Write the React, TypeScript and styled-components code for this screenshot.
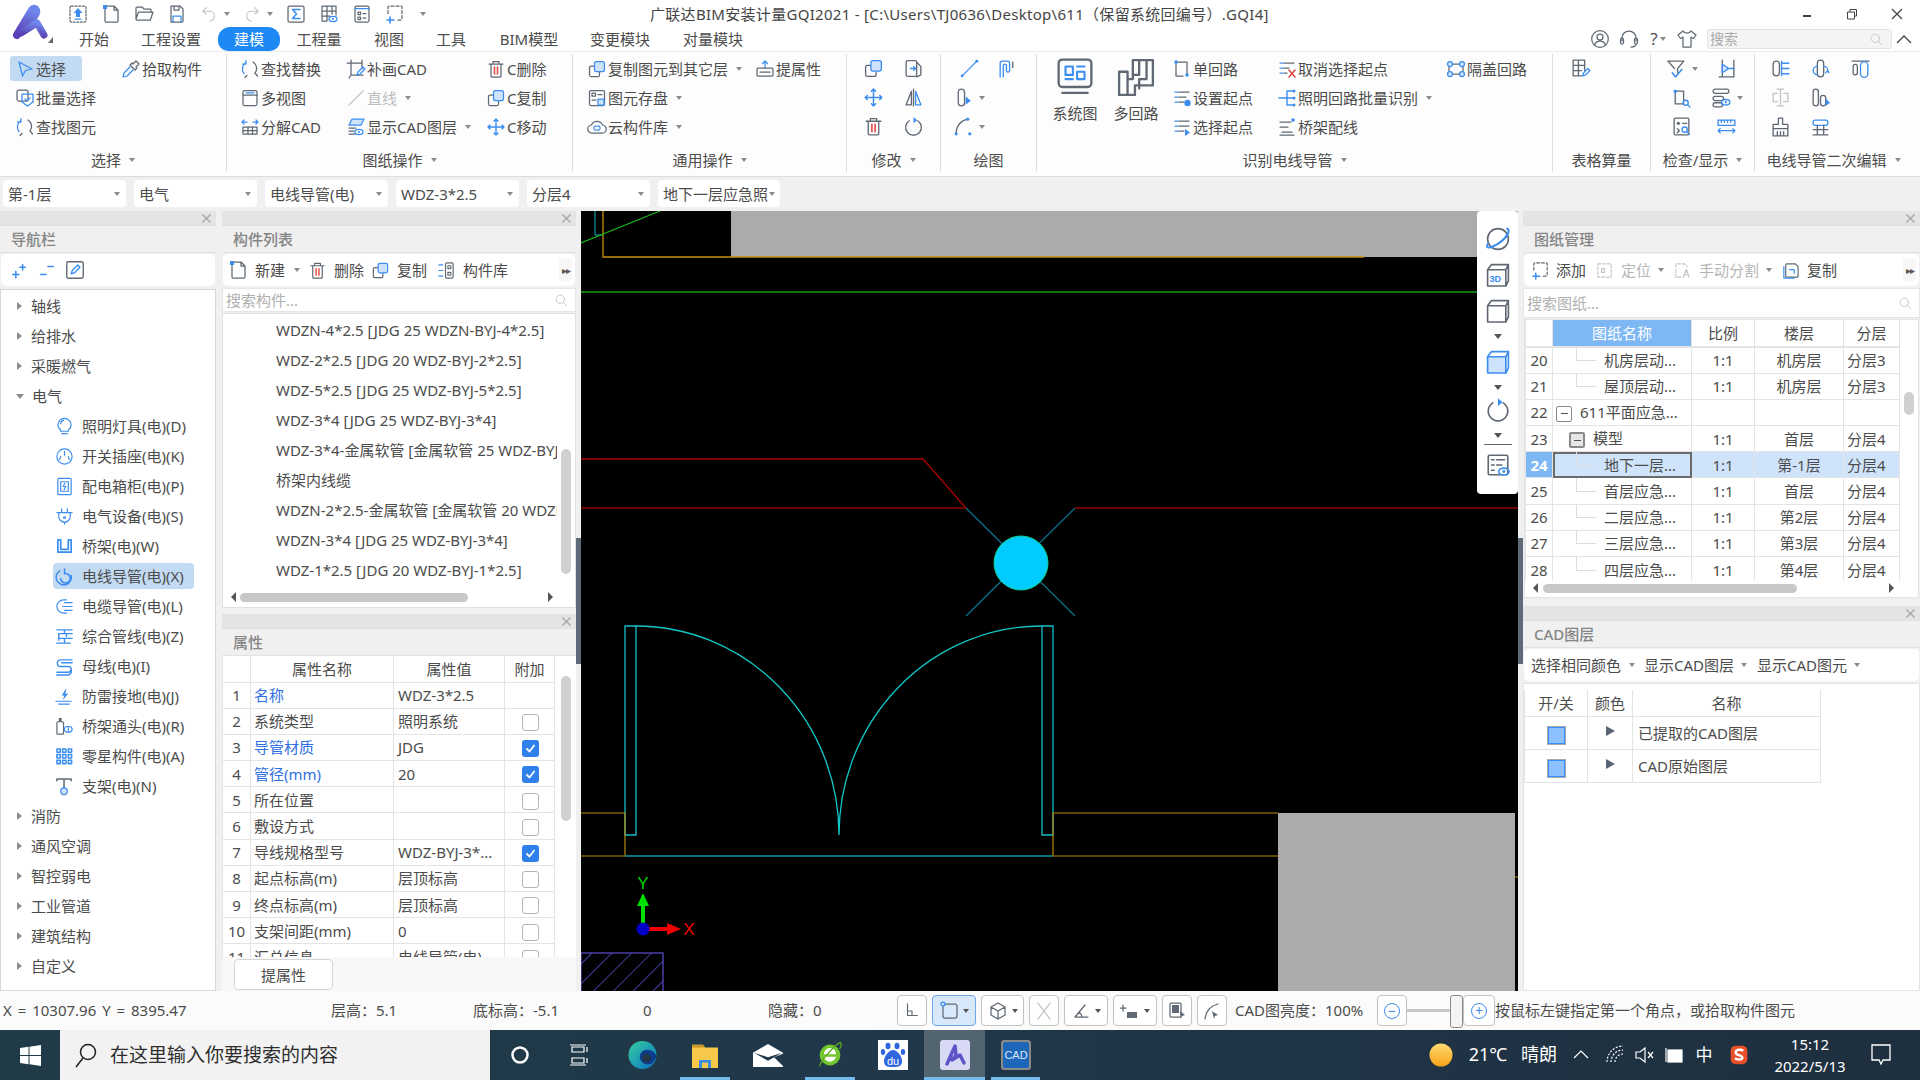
import React from 'react';
import styled, { createGlobalStyle, css } from 'styled-components';

const Global = createGlobalStyle`
  html, body { margin: 0; padding: 0; background: #f0f0f0; }
  * { box-sizing: border-box; }
  body { font-family: "Noto Sans", "Noto Sans CJK SC", sans-serif; font-size: 15px; line-height: 1.2; color: #4c4c4c; }
`;

const Root = styled.div`
  width: 1920px; height: 1080px; overflow: hidden; display: flex; flex-direction: column; background: #f0f0f0;
`;

/* ---------- icons ---------- */
const Svg = styled.svg<{ $off?: boolean }>`
  flex: none; fill: none; stroke: #5f6873; stroke-width: 1.25; stroke-linecap: round; stroke-linejoin: round;
  .a { stroke: #3b8df0; }
  .f { fill: #3b8df0; stroke: none; }
  .l { fill: #cfe2fb; stroke: #3b8df0; }
  .r { stroke: #e2453f; }
  .k { fill: #5f6873; stroke: none; }
  .t { fill: #3b8df0; stroke: none; font: 700 7px "Liberation Sans", sans-serif; }
  ${p => p.$off && css`
    stroke: #c4c4c4;
    .a, .r { stroke: #c4c4c4; }
    .l { fill: none; stroke: #c4c4c4; }
    .f, .k { fill: #c4c4c4; }
  `}
`;

const eye = (x: number, y: number) => (
  <>
    <ellipse className="a" cx={x} cy={y} rx="4" ry="2.6" />
    <circle className="f" cx={x} cy={y} r="1.1" />
  </>
);

const ICONS: Record<string, React.ReactNode> = {
  upload: <><rect x="2" y="2" width="16" height="16" rx="1.5" strokeDasharray="2 1.6" /><path className="f" d="M10 4l4.5 5H12v4H8V9H5.500z" /><path className="a" d="M7 15h6" /></>,
  newfile: <><path d="M5 2h8l4 4v11a1 1 0 0 1-1 1H5a1 1 0 0 1-1-1V3a1 1 0 0 1 1-1zM13 2v4h4" /><rect className="f" x="2" y="1" width="4" height="4" /></>,
  folder: <path d="M2 15V4a1 1 0 0 1 1-1h5l2 2h6a1 1 0 0 1 1 1v2M2 15l2.500-7H19l-2.600 8H3a1 1 0 0 1-1-1z" />,
  save: <><path d="M4 2h9l3 3v12a1 1 0 0 1-1 1H4z" /><path d="M7 2v4h5V2" /><path className="a" d="M6 18v-6h8v6" /></>,
  undo: <path d="M7 3L3 7l4 3M3 7h8a5 5 0 0 1 5 5c0 3-2 5-5 6" />,
  redo: <path d="M13 3l4 4-4 3M17 7H9a5 5 0 0 0-5 5c0 3 2 5 5 6" />,
  sigma: <><rect x="2" y="2" width="16" height="16" rx="1.500" /><path className="a" strokeWidth="1.600" d="M14 5.500H6.500l4 4.500-4 4.500H14" /></>,
  gridview: <><path d="M3 16V2h14v9M3 7h14M3 12h8M8 2v15H3M13 2v8" />{eye(14, 15)}</>,
  listdoc: <><rect x="3" y="2" width="14" height="16" rx="1.500" /><path className="a" d="M3 4.500h14" /><rect x="6" y="8" width="2.600" height="2.600" /><rect x="6" y="13" width="2.600" height="2.600" /><path d="M11 9.500h3M11 14h3" /></>,
  addframe: <><path strokeDasharray="3 2" d="M9 2H4a1 1 0 0 0-1 1v7M11 2h5a1 1 0 0 1 1 1v12a1 1 0 0 1-1 1h-3" /><path className="a" strokeWidth="1.600" d="M5 13v6M2 16h7" /></>,
  pointer: <path className="a" d="M4 3l13 7-6.500 1.500L7.500 17z" />,
  dropper: <><path d="M15 2l3 3-3 3 1 1-2 2-5-5 2-2 1 1z" /><path className="a" d="M9 8l-6 6-1 4 4-1 6-6" /></>,
  batch: <><rect x="2" y="2" width="11" height="11" rx="2" /><path className="a" d="M7 6h11v8l-5.500 4L7 14z" /><path className="a" d="M10 11l2 2 3-3" /></>,
  find: <><path className="a" d="M6 3.500a7.500 7.500 0 0 0-2 11M6 1.500v3.500H2.500" /><path d="M13 3a7.500 7.500 0 0 1 2 11l2.500 3M7 16.500l-2 2" /></>,
  window: <><rect x="3" y="2.500" width="14" height="15" rx="1.500" /><path d="M3 7h14" /><path className="a" d="M6 4.800h8" /></>,
  split: <><path className="a" d="M2 5h5M4 3L2 5l2 2M18 5h-5M16 3l2 2-2 2" /><rect x="3" y="10" width="14" height="7" /><path d="M3 13.500h14M8 10v7M12.500 10v7" /></>,
  crop: <><path d="M5 1v15h12M1 4h15v6M3 19l2-3M16 1v3" /><path className="a" d="M11 16l1-3 5-5 2 2-5 5z" /></>,
  line: <path d="M3 17L17 3" />,
  layers: <><path className="l" d="M6 2h12l-3 6H3z" /><path d="M3 11h7M3 14h5M3 17h6" />{eye(13, 15)}</>,
  trash: <><path d="M3 5h14M7 5V2.500h6V5M5 5v12a1 1 0 0 0 1 1h8a1 1 0 0 0 1-1V5" /><path className="r" strokeWidth="1.500" d="M8.500 8v7M11.500 8v7" /></>,
  copy: <><path d="M8 7H4a1.500 1.500 0 0 0-1.500 1.500V16A1.500 1.500 0 0 0 4 17.500h7a1.500 1.500 0 0 0 1.500-1.500v-3" /><rect className="l" x="7.500" y="2.500" width="10" height="10" rx="2" /></>,
  move: <><path className="a" strokeWidth="1.400" d="M10 2v16M2 10h16M8 4l2-2 2 2M8 16l2 2 2-2M4 8l-2 2 2 2M16 8l2 2-2 2" /></>,
  store: <><rect x="2.500" y="2.500" width="15" height="15" rx="1.500" /><rect x="5" y="5" width="3.500" height="3" /><path d="M11 6.500h4M5 12h4" /><rect className="l" x="11" y="11" width="6" height="6" /></>,
  cloud: <><path d="M5 16a4 4 0 0 1-.5-8A6 6 0 0 1 15.500 8 4 4 0 0 1 15 16z" /><rect className="a" x="7" y="9" width="6" height="4" rx="1.500" /></>,
  prop: <><path className="a" d="M10 9V2M7.500 4.500L10 2l2.500 2.500" /><rect x="2" y="9" width="16" height="8" rx="1" /><path d="M5 13h10" /></>,
  door: <><rect x="3" y="2.500" width="10" height="15" rx="1.500" /><path className="a" d="M7 10h5M10 8l2 2-2 2" /><path d="M13 4l4 4v8l-4 2" /></>,
  mirror: <><path d="M8 4L3 17h5zM10 2v16" /><path className="a" d="M12 4l5 13h-5z" /></>,
  rotate: <><path d="M6 4.500a7.500 7.500 0 1 0 8 0" /><path className="f" d="M10 1l3.500 3L10 7z" /></>,
  segment: <><path className="a" d="M3 17L17 3" /><circle className="f" cx="3" cy="17" r="1.400" /><circle className="f" cx="17" cy="3" r="1.400" /></>,
  pipe: <><path className="a" d="M3 18V5a2 2 0 0 1 2-2h5a2 2 0 0 1 2 2v7M6 18V7a1 1 0 0 1 1-1h1a1 1 0 0 1 1 1v5" /><path d="M15 4v5" /><path className="a" d="M12 12a1.500 1.500 0 0 1-3 0" /></>,
  tube: <><rect x="5" y="2" width="6" height="16" rx="3" /><path className="f" d="M12 9l5 4-5 4z" /></>,
  arc: <><path d="M3 17C3 9 8 4 14 3" /><circle className="f" cx="3" cy="17" r="1.500" /><circle className="f" cx="14" cy="3" r="1.500" /><circle className="f" cx="16" cy="17" r="1.500" /></>,
  system: <><rect x="2.500" y="1.500" width="31" height="26" rx="3.500" strokeWidth="2.200" /><path d="M6 33h24" strokeWidth="2.200" /><path className="a" strokeWidth="2" d="M9 8h7v8H9zM20 8h7M20 13h7v7h-7zM9 20h7" /></>,
  multi: <path strokeWidth="2.200" d="M2 13h8v22H2zM10 20h5V2M15 2h19v24H17v9h-7M21 2v14h-6M28 2v18H21v9" />,
  single: <><path d="M4 3h11v12M4 3v14h7" /><circle className="f" cx="4" cy="3" r="1.800" /><circle className="f" cx="15" cy="16" r="1.800" /></>,
  setstart: <><path className="a" d="M3 4h3M3 9h3M3 14h3" /><path d="M7 4h10M7 9h7M7 14h5" /><circle className="f" cx="15.500" cy="15" r="3.200" /></>,
  pickstart: <><path className="a" d="M3 4h3M3 9h3M3 14h3" /><path d="M7 4h10M7 9h10M7 14h5" /><path className="f" d="M13 12l5 3.500-5 3.500z" /></>,
  cancel: <><path className="a" d="M3 4h3M3 9h3M3 14h3" /><path d="M7 4h10M7 9h5M7 14h3" /><path className="r" strokeWidth="1.500" d="M12 11l6 7M18 11l-6 7" /></>,
  tree: <><path className="a" strokeWidth="1.400" d="M2 10h8M10 3v14M10 3h6M10 10h6M10 17h6" /><circle className="f" cx="17" cy="3" r="1.500" /><circle className="f" cx="17" cy="10" r="1.500" /><circle className="f" cx="17" cy="17" r="1.500" /></>,
  trayline: <><path d="M3 5h11M3 10h8M3 18h14M5 15h10" /><circle className="f" cx="16" cy="3" r="1.800" /></>,
  shield: <><rect x="3" y="5" width="14" height="10" rx="3" /><circle className="l" cx="4" cy="5" r="2.500" /><circle className="l" cx="16" cy="5" r="2.500" /><circle className="l" cx="4" cy="15" r="2.500" /><circle className="l" cx="16" cy="15" r="2.500" /></>,
  tableedit: <><path d="M14 12V2H3v15h8M3 7h11M8 2v15M3 12h8" /><path className="a" d="M12 17l1-3 4-4 2 2-4 4z" /></>,
  filter: <><path d="M2 3h15l-6 7v4" /><path d="M8 10L2 3" /><path className="a" strokeWidth="1.500" d="M6 14l3 4 6-7" /></>,
  beam: <><path d="M3 18h14V2M6 18V2" /><path className="l" d="M6 6l5 3v2l-5 3z" /><path className="a" d="M11 10h6" /></>,
  corner: <><path d="M4 4h8v12H4z" /><circle className="f" cx="4" cy="4" r="1.600" /><circle className="a" cx="14" cy="15" r="2.400" /><path className="a" d="M16 17l2 2" /></>,
  stack: <><rect x="2" y="2" width="15" height="4" rx="2" /><rect x="2" y="9" width="10" height="4" rx="2" /><rect x="2" y="15" width="9" height="4" rx="2" />{eye(14, 14.500)}</>,
  check: <><rect x="3" y="2" width="14" height="16" rx="1" /><circle className="k" cx="7" cy="7" r="1.500" /><path d="M11 7h4M6 12l2 2-2 2" /><circle className="a" cx="13" cy="13" r="2.500" /><path className="a" d="M15 15l2.500 2.500" /></>,
  ruler: <><path className="a" d="M2 4h16v5H2zM5 4v2M8 4v2M11 4v2M14 4v2M2 14h16M4 12l-2 2 2 2M16 12l2 2-2 2" /></>,
  lines: <><rect x="3" y="3" width="6" height="14" rx="3" /><path className="a" d="M11 5h7M11 10h7M11 15h7M11 3v14" /></>,
  bend: <><rect x="7" y="2" width="6" height="16" rx="3" /><path className="a" d="M7 8a4 4 0 0 0 0 8M13 8a4 4 0 0 1 4 4M15 14l2-2 1 2" /></>,
  capsule: <><path d="M2 3h16" /><rect x="3" y="6" width="4" height="10" rx="2" /><rect className="a" x="10" y="3.500" width="7" height="15" rx="3.500" /></>,
  ibeam: <><path d="M10 2v16M7 2h6M7 18h6" /><path d="M7 6H3v8h4M13 6h4v8h-4" /></>,
  twopipe: <><rect x="3" y="2" width="5" height="16" rx="2.500" /><rect x="10" y="8" width="5" height="10" rx="2.500" /><path className="f" d="M15 11l4 4-4 3z" /></>,
  brush: <><path d="M8 2h4v6h5v4H3V8h5zM3 12v7h14v-7M7 15v4M10 15v4M13 15v4" /></>,
  bridge: <><rect className="a" x="3" y="4" width="14" height="5" rx="2" /><path d="M7 9v9M13 9v9M3 18h14M3 13h14" /></>,
  orbit: <><circle cx="10" cy="10" r="8" /><path className="a" strokeWidth="1.600" d="M2 14c-2 4 3 3 9-1s9-10 6-11" /></>,
  cube3d: <><path d="M2 6h14v12.500H2zM2 6l3-4h13v12.500l-2 4M16 6l2-4" /><text className="t" x="3.500" y="15.500">3D</text></>,
  cube: <path d="M2 6h14v12.500H2zM2 6l3-4h13v12.500l-2 4M16 6l2-4" />,
  cubeblue: <><path className="l" d="M2 6h14v12.500H2z" /><path className="a" d="M2 6l3-4h13v12.500l-2 4M16 6l2-4" /></>,
  listeye: <><rect x="2.500" y="2.500" width="15" height="15" rx="1" /><path d="M5 6h2M9 6h6M5 10h2M9 10h4M5 14h2" />{eye(14.500, 15)}</>,
  user: <><circle cx="10" cy="10" r="8.300" /><circle cx="10" cy="8" r="3" /><path d="M4.500 16c1-3 3-4 5.500-4s4.500 1 5.500 4" /></>,
  headset: <><path d="M3 12V9a7 7 0 0 1 14 0v3" /><rect x="1.500" y="9" width="3" height="6" rx="1.500" /><rect x="15.500" y="9" width="3" height="6" rx="1.500" /><path d="M17 15c0 2-2 3-5 3" /></>,
  shirt: <path d="M6 2L1 6l2.500 3.500L6 8v10h8V8l2.500 1.500L19 6l-5-4c-1 2-3 2-4 2S7 4 6 2z" />,
  search: <><circle cx="9" cy="9" r="6" /><path d="M13.500 13.500L18 18" /></>,
  bulb: <><path className="a" d="M6 14C4 12 3 10.500 3 8.500a7 7 0 0 1 14 0c0 2-1 3.500-3 5.500v1H6z" /><path className="a" d="M7 17.500h6" /><path className="a" d="M6 7c0-2 1-3 3-3.500" /></>,
  socket: <><circle className="a" cx="10" cy="10" r="8" /><path className="a" d="M10 4.500v4M6 10l-1 3M14 10l1 3" /></>,
  box: <><rect className="a" x="3" y="1.500" width="14" height="17" rx="1" /><rect className="a" x="6" y="5" width="8" height="10" /><path className="a" d="M10.500 6.500L8.500 10h3l-2 3.500" /></>,
  plug: <><path className="a" d="M2 6h16M7 2v4M13 2v4M4 6v4a6 6 0 0 0 12 0V6M10 16v2" /><circle className="a" cx="10" cy="11" r="1" /></>,
  tray: <path className="a" strokeWidth="1.800" d="M3 3v13h14V3M3 3h2M17 3h-2M6 3v10h8V3" />,
  spiral: <><path className="a" strokeWidth="1.600" d="M5 4a8 8 0 1 0 12 5M10 2v5a5 5 0 1 1-4 5" /></>,
  cable: <><path className="a" d="M12 3H9a7 7 0 0 0 0 14h3" /><path className="a" d="M10 6h8M8 10h10M10 14h8" /></>,
  bundle: <path className="a" strokeWidth="1.500" d="M2 3h16M10 3v4M4 7h14M4 7v7M12 7v3M4 12h14M2 17h14M10 12v5" />,
  busbar: <path className="a" strokeWidth="1.500" d="M18 3H6a3.500 3.500 0 0 0 0 7h8a3 3 0 0 1 0 6H2M18 6H7M17 13a5 5 0 0 1-3 6H2" />,
  bolt: <><path className="f" d="M12 1L7 9h3l-2 5 6-7h-3z" /><path className="a" d="M1 15h16M4 18h11" /></>,
  joint: <><rect x="2" y="5" width="7" height="13" rx="1" /><path className="k" d="M4 1h3v4H4z" /><rect className="a" x="10" y="10" width="8" height="6" rx="3" /><path className="a" d="M14 10v6" /></>,
  grid9: <path className="a" strokeWidth="1.600" d="M2 2h3.500v3.500H2zM8 2h3.500v3.500H8zM14 2h3.500v3.500H14zM2 8h3.500v3.500H2zM8 8h3.500v3.500H8zM14 8h3.500v3.500H14zM2 14h3.500v3.500H2zM8 14h3.500v3.500H8zM14 14h3.500v3.500H14z" />,
  support: <><path strokeWidth="1.600" d="M2 2h15M2 2v2M17 2v2M9.500 2v10" /><circle className="l" cx="9.500" cy="15" r="3.500" /></>,
  plusdot: <path className="a" strokeWidth="1.700" d="M3 15h7M6.500 11.500v7M11 7h6M14 4v6" />,
  minusdot: <path className="a" strokeWidth="1.700" d="M3 15h6M11 6h6" />,
  editbox: <><rect x="2.500" y="2.500" width="15" height="15" rx="1.500" /><path className="a" d="M6.500 13.500l1-3 5-5 2 2-5 5z" /></>,
  library: <><path className="a" d="M2 4h4M2 10h4M2 16h4" /><rect x="9" y="2" width="8" height="16" rx="1.500" /><rect x="11.500" y="5" width="3" height="3" /><rect x="11.500" y="12" width="3" height="3" /></>,
  locate: <><path strokeDasharray="3 2" d="M3 3h14v14H3z" /><path d="M7 8h3v4H7z" /></>,
  splitdoc: <><path strokeDasharray="3 2" d="M3 6V3h9l3 3M3 9v8h6" /><path d="M11 17l3-8 3 8M12 14.500h4" /></>,
  copydoc: <><path d="M6 3h9l3 3v10a1 1 0 0 1-1 1H6a1 1 0 0 1-1-1V4a1 1 0 0 1 1-1z" /><path className="a" d="M3 6v12h11" /><path className="a" d="M9 9h5v4" /></>,
  axes: <path d="M5 2v13h11M5 10h5v5" />,
  rectpick: <><rect x="4" y="3" width="14" height="14" rx="2" /><circle className="l" cx="4" cy="3" r="2" /></>,
  hexbox: <><path d="M10 2l7 4v8l-7 4-7-4V6zM3 6l7 4 7-4M10 10v8" /></>,
  xcross: <path d="M4 2l12 16M16 2L4 18" />,
  angle: <path d="M4 16L14 4M4 16h13M8 11a7 7 0 0 1 3 5" />,
  plusbar: <><path d="M3 4v6M0 7h6" /><rect className="k" x="7" y="11" width="10" height="6" /></>,
  screen: <><rect x="3" y="2" width="11" height="14" rx="1" /><rect className="k" x="5" y="4" width="7" height="8" /><path className="k" d="M13 10l5 4-3 1-1 3z" /></>,
  curve: <><path d="M3 18C4 10 8 5 16 3" /><path className="k" d="M10 10l6 4-3 1-1 3z" /></>,
};

const Icon: React.FC<{ name: string; size?: number; off?: boolean; box?: number }> = ({ name, size = 20, off, box = 20 }) => (
  <Svg width={size} height={size} viewBox={`0 0 ${box} ${box}`} $off={off}>{ICONS[name]}</Svg>
);

const Caret = styled.i<{ $up?: boolean; $ml?: number }>`
  flex: none; display: inline-block; width: 0; height: 0; margin-left: ${p => p.$ml ?? 8}px;
  border-left: 3.500px solid transparent; border-right: 3.500px solid transparent;
  border-top: 4px solid #8b8b8b;
`;

/* ---------- header ---------- */
const Header = styled.header`
  height: 51px; flex: none; background: #fff; display: flex;
`;
const LogoSlot = styled.div`
  width: 64px; flex: none; display: flex; align-items: flex-start; padding: 4px 0 0 11px;
`;
const HeaderMain = styled.div`flex: 1; display: flex; flex-direction: column;`;
const TitleRow = styled.div`height: 27px; display: flex; align-items: center;`;
const Qat = styled.div`width: 586px; padding-left: 4px; display: flex; align-items: center; gap: 13px;`;
const QatGroup = styled.span`display: inline-flex; align-items: center; gap: 0;`;
const WindowTitle = styled.div`flex: 1; font-size: 15px; letter-spacing: 0.3px; color: #454545; white-space: pre;`;
const WinControls = styled.div`width: 136px; display: flex; align-items: center; gap: 0;`;
const WinBtn = styled.span`width: 47px; display: flex; justify-content: center;`;
const TabRow = styled.div`height: 24px; display: flex; align-items: stretch;`;
const Tab = styled.div<{ $w: number; $on?: boolean }>`
  width: ${p => p.$w}px; flex: none; display: flex; align-items: center; justify-content: center;
  font-size: 15px; color: #4c4c4c;
  ${p => p.$on && css`background: #1e88f5; color: #fff; border-radius: 12px 12px 10px 10px;`}
`;
const TabTools = styled.div`margin-left: auto; display: flex; align-items: center; padding-right: 6px;`;
const ToolGlyph = styled.span<{ $w: number }>`
  width: ${p => p.$w}px; display: flex; justify-content: center; align-items: center; font-size: 17px; color: #555;
`;
const TopSearch = styled.div`
  width: 185px; height: 20px; margin: 0 2px 0 6px; background: #f4f4f4; border: 1px solid #e4e4e4; border-radius: 3px;
  display: flex; align-items: center; justify-content: space-between; padding: 0 8px 0 2px; color: #aaa; font-size: 14px;
`;

/* ---------- ribbon ---------- */
const Ribbon = styled.section`
  height: 126px; flex: none; background: #fdfdfd; border-top: 1px solid #ececec; border-bottom: 1px solid #dcdcdc;
  padding-top: 2px; display: flex; align-items: flex-start;
`;
const Group = styled.div<{ $w: number; $pad?: number; $last?: boolean }>`
  width: ${p => p.$w}px; flex: none; height: 118px; display: flex; flex-direction: column; justify-content: space-between;
  padding-left: ${p => p.$pad ?? 0}px;
  ${p => !p.$last && 'border-right: 1px solid #dedede;'}
`;
const GroupBody = styled.div`display: flex; align-items: flex-start;`;
const GroupLabel = styled.div<{ $shift?: number }>`
  height: 24px; display: flex; align-items: center; justify-content: center; color: #4c4c4c; white-space: nowrap;
  margin-left: ${p => p.$shift ?? 0}px;
`;
const Col = styled.div<{ $w?: number }>`
  ${p => p.$w ? `width: ${p.$w}px; flex: none;` : ''} display: flex; flex-direction: column;
`;
const Item = styled.div<{ $on?: boolean; $off?: boolean; $w?: number }>`
  height: 29px; display: flex; align-items: center; padding-left: 3px; white-space: nowrap;
  color: ${p => p.$off ? '#bdbdbd' : '#4c4c4c'};
  ${p => p.$on && css`background: #c3daf3; border-radius: 3px; height: 25px; margin: 2px 0; width: 72px;`}
`;
const ItemIcon = styled.span`width: 23px; flex: none; display: flex; justify-content: center; margin-right: 0;`;
const Label = styled.span`margin-left: 0;`;
const IconCell = styled.div`height: 29px; display: flex; align-items: center; justify-content: center;`;
const BigTool = styled.div<{ $w: number }>`
  width: ${p => p.$w}px; flex: none; display: flex; flex-direction: column; align-items: center; gap: 8px; padding-top: 4px; color: #4c4c4c;
`;

const RItem: React.FC<{ icon: string; text: string; on?: boolean; off?: boolean; caret?: boolean }> = ({ icon, text, on, off, caret }) => (
  <Item $on={on} $off={off}>
    <ItemIcon><Icon name={icon} size={20} off={off} /></ItemIcon>
    <Label>{text}</Label>
    {caret && <Caret />}
  </Item>
);
const ICell: React.FC<{ icon: string; off?: boolean; caret?: boolean }> = ({ icon, off, caret }) => (
  <IconCell><Icon name={icon} size={21} off={off} />{caret && <Caret $ml={5} />}</IconCell>
);

/* ---------- selector row ---------- */
const SelectRow = styled.div`
  height: 34px; flex: none; display: flex; gap: 8px; padding: 3px 0 0 3px; background: #f0f0f0;
`;
const Select = styled.div<{ $w?: number }>`
  width: ${p => p.$w ?? 123}px; height: 27px; background: #fff; border-radius: 4px; display: flex; align-items: center;
  justify-content: space-between; padding: 0 6px 0 5px; color: #4c4c4c; white-space: nowrap;
`;

/* ---------- main panels ---------- */
const Main = styled.main`height: 780px; flex: none; display: flex; align-items: stretch;`;
const Splitter = styled.div<{ $w: number }>`
  width: ${p => p.$w}px; flex: none; display: flex; align-items: center; justify-content: flex-end;
  &::after { content: ""; width: 5px; height: 126px; background: #5d6b78; }
`;
const PlainGap = styled.div`width: 6px; flex: none;`;
const Column = styled.div<{ $w: number }>`width: ${p => p.$w}px; flex: none; display: flex; flex-direction: column;`;
const Strip = styled.div`
  height: 14px; flex: none; background: #e4e4e4; display: flex; align-items: center; justify-content: flex-end; padding-right: 5px;
`;
const CloseX = styled.svg`width: 9px; height: 9px; stroke: #a6a6a6; stroke-width: 1.300; fill: none;`;
const PanelTitle = styled.div`
  height: 28px; flex: none; background: #f0f0f0; border-top: 1px solid #dedede; border-bottom: 1px solid #e2e2e2; display: flex; align-items: center;
  padding-left: 11px; color: #858585; font-weight: 500;
`;
const PanelToolbar = styled.div<{ $h?: number }>`
  height: ${p => p.$h ?? 33}px; flex: none; margin: 1px 1px 2px; background: #fff; border-radius: 5px; display: flex; align-items: center;
  position: relative; white-space: nowrap;
`;
const TBtn = styled.span<{ $w: number; $off?: boolean; $pad?: number; $gap?: number }>`
  width: ${p => p.$w}px; flex: none; display: flex; align-items: center; gap: ${p => p.$gap ?? 7}px; padding-left: ${p => p.$pad ?? 0}px;
  color: ${p => p.$off ? '#b5b5b5' : '#4c4c4c'};
`;
const More = styled.span`
  margin-left: auto; margin-right: 3px; width: 13px; height: 24px; border-radius: 4px; background: #f7f7f7; color: #555; font-size: 10px;
  display: flex; align-items: center; justify-content: center; letter-spacing: -1px;
`;
const SearchBar = styled.div<{ $h: number }>`
  height: ${p => p.$h}px; flex: none; background: #fff; border: 1px solid #e6e6e6; display: flex; align-items: center;
  justify-content: space-between; padding: 0 7px 0 3px; color: #b0b0b0; margin-bottom: 1px;
`;

const NavTree = styled.div`
  flex: 1; background: #fff; border: 1px solid #d8d8d8; padding-top: 1px; margin-top: 1px;
`;
const TreeRow = styled.div<{ $child?: boolean; $on?: boolean }>`
  height: 30px; display: flex; align-items: center; padding-left: ${p => p.$child ? 54 : 16}px; white-space: nowrap;
`;
const Arrow = styled.i<{ $open?: boolean }>`
  flex: none; width: 0; height: 0; margin-right: 9px;
  ${p => p.$open
    ? 'border-left: 4px solid transparent; border-right: 4px solid transparent; border-top: 5px solid #8c8c8c; margin-left: -1px; margin-right: 8px;'
    : 'border-top: 4.500px solid transparent; border-bottom: 4.500px solid transparent; border-left: 5px solid #8c8c8c;'}
`;
const ChildPill = styled.span<{ $on?: boolean }>`
  display: flex; align-items: center; gap: 8px; height: 26px; width: 141px; margin-left: -2px; padding-left: 2px; border-radius: 4px;
  ${p => p.$on && 'background: #c3daf3;'}
`;

const ListBox = styled.div`
  flex: none; height: 295px; background: #fff; border: 1px solid #e0e0e0; position: relative; overflow: hidden; padding: 1px 0 0 53px;
`;
const ListRow = styled.div`height: 30px; width: 281px; overflow: hidden; white-space: nowrap; display: flex; align-items: center;`;
const ScrollV = styled.div<{ $top: number; $h: number; $right: number }>`
  position: absolute; top: ${p => p.$top}px; right: ${p => p.$right}px; width: 10px; height: ${p => p.$h}px; background: #d0d0d0; border-radius: 5px;
`;
const HScrollBar = styled.div<{ $left: number; $w: number; $bottom: number }>`
  position: absolute; left: ${p => p.$left}px; bottom: ${p => p.$bottom}px; width: ${p => p.$w}px; height: 9px; border-radius: 5px; background: #c8c8c8;
`;
const HArrow = styled.i<{ $right?: boolean; $x: number; $bottom: number }>`
  position: absolute; bottom: ${p => p.$bottom}px; ${p => p.$right ? `left: ${p.$x}px; border-left: 5px solid #555;` : `left: ${p.$x}px; border-right: 5px solid #555;`}
  width: 0; height: 0; border-top: 5px solid transparent; border-bottom: 5px solid transparent;
`;

const PropArea = styled.div`
  height: 301px; flex: none; background: #fff; position: relative; overflow: hidden;
`;
const Grid = styled.table<{ $w: number }>`
  width: ${p => p.$w}px; table-layout: fixed; border-collapse: collapse; background: #fff;
`;
const Th = styled.th<{ $w?: number; $sel?: boolean }>`
  ${p => p.$w ? `width: ${p.$w}px;` : ''} height: 26px; font-weight: 400; color: #4c4c4c; padding: 0; border: 1px solid #e4e4e4; border-top: 0;
  ${p => p.$sel && 'background: #7db8f5; color: #fff;'}
`;
const Td = styled.td<{ $c?: boolean; $blue?: boolean; $num?: boolean; $sel?: boolean; $rowsel?: boolean; $pad?: number }>`
  height: 26.200px; padding: 0 0 0 ${p => p.$pad ?? 3}px; border: 1px solid #e4e4e4; white-space: nowrap; overflow: hidden;
  color: ${p => p.$blue ? '#2f6fe0' : '#4c4c4c'};
  ${p => (p.$c || p.$num) && 'text-align: center; padding: 0;'}
  ${p => p.$rowsel && 'background: #cfe4fb;'}
  ${p => p.$sel && 'background: #7db8f5; color: #fff; font-weight: 700;'}
`;
const Check = styled.span<{ $on?: boolean }>`
  display: inline-flex; width: 17px; height: 17px; vertical-align: middle; border-radius: 3px; align-items: center; justify-content: center; margin-left: 1px;
  ${p => p.$on ? 'background: #2f80ea;' : 'background: #fff; border: 1px solid #b5b5b5;'}
`;
const FootRow = styled.div`flex: 1; background: #f8f8f8; padding: 2px 0 0 12px;`;
const PlainBtn = styled.button`
  width: 99px; height: 31px; font: inherit; color: #4c4c4c; background: #fff; border: 1px solid #d5d5d5; border-radius: 4px;
`;

const NameCell = styled(Td)<{ $depth: number; $leaf?: boolean; $focus?: boolean }>`
  position: relative; padding-left: ${p => p.$depth}px;
  ${p => p.$leaf && css`
    &::before { content: ""; position: absolute; left: 23px; width: 20px; top: 50%; border-top: 1px solid #ddd; }
    &::after { content: ""; position: absolute; left: 23px; top: 0; bottom: 50%; border-left: 1px solid #ddd; }
  `}
  ${p => p.$focus && 'outline: 2px solid #6b6b6b; outline-offset: -2px; background: #cfe4fb;'}
`;
const TreeBox = styled.span<{ $strong?: boolean }>`
  display: inline-flex; width: 16px; height: 16px; margin-right: 8px; vertical-align: middle; border: 1px solid #8a8a8a; border-radius: 2px;
  align-items: center; justify-content: center; ${p => p.$strong && 'background: #e6e6e6; border-width: 2px;'}
  &::after { content: ""; width: 7px; border-top: 1px solid #555; }
`;
const DrawingArea = styled.div`
  height: 279px; flex: none; background: #fff; border: 1px solid #e4e4e4; margin: 0 1px; position: relative; overflow: hidden;
`;
const BodyClip = styled.div`height: 234px; overflow: hidden;`;

const Canvas = styled.div`
  width: 937px; flex: none; position: relative; background: #000; overflow: hidden;
`;
const CanvasSvg = styled.svg`display: block;`;
const FloatBar = styled.div`
  position: absolute; top: 0; right: 0; width: 41px; height: 283px; background: #fff; border-radius: 4px; display: flex; flex-direction: column; align-items: center; padding-top: 15px;
`;
const FloatIcon = styled.span<{ $mt?: number }>`display: flex; margin-top: ${p => p.$mt ?? 0}px;`;
const FloatCaret = styled.i`
  margin-top: 10px; width: 0; height: 0; border-left: 4px solid transparent; border-right: 4px solid transparent; border-top: 5px solid #555; margin-bottom: 1px;
`;
const FloatSep = styled.hr`width: 28px; border: 0; border-top: 1px solid #666; margin: 5px 0 0;`;

const CadHead = styled.div<{ $mt: number }>`height: 14px; flex: none; background: #e4e4e4; margin-top: ${p => p.$mt}px; display: flex; align-items: center; justify-content: flex-end; padding-right: 5px;`;
const CadArea = styled.div`flex: 1; background: #fff; padding-top: 6px; border: 1px solid #e4e4e4; margin-top: 0;`;
const CadRowTd = styled(Td)`height: 33px;`;
const Swatch = styled.span`
  display: inline-block; width: 17px; height: 17px; vertical-align: middle; background: #8cc0ff; border: 1px solid #3a8dff; outline: 1px solid #a9a9a9; outline-offset: 0; margin-top: 5px;
`;
const PlayTri = styled.i`
  display: inline-block; width: 0; height: 0; border-top: 5px solid transparent; border-bottom: 5px solid transparent; border-left: 9px solid #596477; margin-bottom: 3px;
`;

/* ---------- status bar ---------- */
const Status = styled.footer`
  height: 39px; flex: none; background: #fbfbfb; display: flex; align-items: center; white-space: nowrap;
`;
const StatusCell = styled.span<{ $w: number; $pad?: number }>`width: ${p => p.$w}px; flex: none; padding-left: ${p => p.$pad ?? 0}px; margin-top: -2px;`;
const CoordCell = styled(StatusCell)`word-spacing: 2px;`;
const StatusBtns = styled.div`display: flex; gap: 5px; align-items: center; flex: none;`;
const StatusBtn = styled.span<{ $w: number; $on?: boolean; $off?: boolean }>`
  width: ${p => p.$w}px; height: 31px; flex: none; display: flex; align-items: center; justify-content: center; gap: 3px; background: #fff;
  border: 1px solid #c2c2c2; border-radius: 4px;
  ${p => p.$on && 'background: #d8e8fb; border-color: #6ea8ea;'}
  i { border-top-color: #555; }
`;
const Slider = styled.div`
  width: 56px; flex: none; height: 3px; background: #c8c8c8; position: relative;
  &::after { content: ""; position: absolute; right: 0; top: -14px; width: 11px; height: 31px; background: #f4f4f4; border: 1px solid #8a8a8a; border-radius: 3px; }
`;
const RoundSym = styled.span`
  width: 16px; height: 16px; border-radius: 50%; border: 1.500px solid #3b8df0; color: #3b8df0; display: flex; align-items: center; justify-content: center;
  font-size: 14px; line-height: 1;
`;

/* ---------- taskbar ---------- */
const Taskbar = styled.div`
  height: 50px; flex: none; background: linear-gradient(90deg, #203b47 0%, #20384a 45%, #1e2f3f 100%); display: flex; align-items: stretch; color: #fff;
`;
const StartBtn = styled.div`width: 60px; flex: none; display: flex; align-items: center; justify-content: center;`;
const TaskSearch = styled.div`
  width: 430px; flex: none; background: #f2f2f2; color: #2e2e2e; display: flex; align-items: center; font-size: 19px; padding-left: 14px; gap: 12px;
`;
const Slot = styled.div<{ $w: number; $run?: boolean; $act?: boolean }>`
  width: ${p => p.$w}px; flex: none; display: flex; align-items: center; justify-content: center; position: relative;
  ${p => p.$act && 'background: #51646f;'}
  ${p => p.$run && css`
    &::after { content: ""; position: absolute; left: ${p.$act ? 0 : 6}px; right: ${p.$act ? 0 : 6}px; bottom: 0; height: 3px; background: #76b9ed; }
  `}
`;
const Tray = styled.div`margin-left: auto; display: flex; align-items: center;`;
const TrayText = styled.span<{ $w: number; $fs?: number }>`
  width: ${p => p.$w}px; flex: none; font-size: ${p => p.$fs ?? 18}px; text-align: center; white-space: nowrap;
`;
const Clock = styled.div`
  width: 104px; flex: none; text-align: center; font-size: 15px; display: flex; flex-direction: column; gap: 4px;
`;

/* ---------- data ---------- */
const TABS: [string, number][] = [['开始', 60], ['工程设置', 94], ['建模', 62], ['工程量', 78], ['视图', 62], ['工具', 62], ['BIM模型', 94], ['变更模块', 88], ['对量模块', 98]];
const SELECTS: [string, number?][] = [['第-1层'], ['电气'], ['电线导管(电)'], ['WDZ-3*2.5'], ['分层4']];
const TREE_TOP = ['轴线', '给排水', '采暖燃气'];
const TREE_EL: [string, string][] = [
  ['bulb', '照明灯具(电)(D)'], ['socket', '开关插座(电)(K)'], ['box', '配电箱柜(电)(P)'], ['plug', '电气设备(电)(S)'], ['tray', '桥架(电)(W)'],
  ['spiral', '电线导管(电)(X)'], ['cable', '电缆导管(电)(L)'], ['bundle', '综合管线(电)(Z)'], ['busbar', '母线(电)(I)'], ['bolt', '防雷接地(电)(J)'],
  ['joint', '桥架通头(电)(R)'], ['grid9', '零星构件(电)(A)'], ['support', '支架(电)(N)'],
];
const TREE_BOTTOM = ['消防', '通风空调', '智控弱电', '工业管道', '建筑结构', '自定义'];
const LIST = [
  'WDZN-4*2.5 [JDG 25 WDZN-BYJ-4*2.5]', 'WDZ-2*2.5 [JDG 20 WDZ-BYJ-2*2.5]', 'WDZ-5*2.5 [JDG 25 WDZ-BYJ-5*2.5]', 'WDZ-3*4 [JDG 25 WDZ-BYJ-3*4]',
  'WDZ-3*4-金属软管 [金属软管 25 WDZ-BYJ-3*4]', '桥架内线缆', 'WDZN-2*2.5-金属软管 [金属软管 20 WDZN-BYJ-2*2.5]', 'WDZN-3*4 [JDG 25 WDZ-BYJ-3*4]', 'WDZ-1*2.5 [JDG 20 WDZ-BYJ-1*2.5]',
];
const PROPS: [string, string, boolean?, boolean?, boolean?][] = [
  ['名称', 'WDZ-3*2.5', true, undefined, true], ['系统类型', '照明系统', false], ['导管材质', 'JDG', true, true], ['管径(mm)', '20', true, true],
  ['所在位置', '', false], ['敷设方式', '', false], ['导线规格型号', 'WDZ-BYJ-3*...', false, true], ['起点标高(m)', '层顶标高', false], ['终点标高(m)', '层顶标高', false],
  ['支架间距(mm)', '0', false], ['汇总信息', '电线导管(电)', false],
];
const BLUE_PROPS = ['名称', '导管材质', '管径(mm)'];
const SHEETS: { n: number; name: string; depth: number; leaf?: boolean; box?: number; ratio: string; floor: string; sub: string }[] = [
  { n: 20, name: '机房层动...', depth: 51, leaf: true, ratio: '1:1', floor: '机房层', sub: '分层3' },
  { n: 21, name: '屋顶层动...', depth: 51, leaf: true, ratio: '1:1', floor: '机房层', sub: '分层3' },
  { n: 22, name: '611平面应急...', depth: 3, box: 1, ratio: '', floor: '', sub: '' },
  { n: 23, name: '模型', depth: 16, box: 2, ratio: '1:1', floor: '首层', sub: '分层4' },
  { n: 24, name: '地下一层...', depth: 51, leaf: true, ratio: '1:1', floor: '第-1层', sub: '分层4' },
  { n: 25, name: '首层应急...', depth: 51, leaf: true, ratio: '1:1', floor: '首层', sub: '分层4' },
  { n: 26, name: '二层应急...', depth: 51, leaf: true, ratio: '1:1', floor: '第2层', sub: '分层4' },
  { n: 27, name: '三层应急...', depth: 51, leaf: true, ratio: '1:1', floor: '第3层', sub: '分层4' },
  { n: 28, name: '四层应急...', depth: 51, leaf: true, ratio: '1:1', floor: '第4层', sub: '分层4' },
];

const Close = () => <CloseX viewBox="0 0 9 9"><path d="M0.500 0.500l8 8M8.500 0.500l-8 8" /></CloseX>;
const CheckMark = () => <svg width="11" height="11" viewBox="0 0 11 11" fill="none" stroke="#fff" strokeWidth="1.800"><path d="M1.500 5.500l3 3 5-6.500" /></svg>;

const Logo = () => (
  <svg width="44" height="42" viewBox="0 0 44 42" fill="none">
    <defs>
      <linearGradient id="lg" x1="0.600" y1="0" x2="0.300" y2="1">
        <stop offset="0" stopColor="#6f86ea" />
        <stop offset="1" stopColor="#5a3fb4" />
      </linearGradient>
    </defs>
    <path d="M6 31L21 6c3-3 5 0 4 3l-7 12" stroke="url(#lg)" strokeWidth="8" strokeLinecap="round" strokeLinejoin="round" />
    <path d="M10 29l16-10 7 12" stroke="url(#lg)" strokeWidth="7" strokeLinecap="round" strokeLinejoin="round" />
    <path d="M42 33v6h-5z" fill="#666" />
  </svg>
);

const CanvasDrawing = () => (
  <CanvasSvg width="937" height="780" viewBox="581 211 937 780">
    <defs>
      <pattern id="hatch" width="14" height="14" patternUnits="userSpaceOnUse" patternTransform="rotate(45)">
        <line x1="0" y1="0" x2="0" y2="14" stroke="#5a4fd0" strokeWidth="1.500" />
      </pattern>
    </defs>
    <rect x="731" y="211" width="787" height="46" fill="#ababab" />
    <rect x="1278" y="813" width="237" height="178" fill="#ababab" />
    <path d="M603 211V257H1364" stroke="#c8920a" fill="none" strokeWidth="1.300" />
    <path d="M595 211V235H603" stroke="#14b8c0" fill="none" />
    <path d="M581 243L660 211" stroke="#18b018" fill="none" strokeWidth="1.200" />
    <path d="M581 292H1518" stroke="#10a010" strokeWidth="1.400" />
    <path d="M581 459H923L966 508" stroke="#a80000" fill="none" strokeWidth="1.300" />
    <path d="M581 508H966M1075 508H1518" stroke="#900000" fill="none" strokeWidth="1.600" />
    <path d="M966 508L1075 616M1075 508L966 616" stroke="#0b6f8c" strokeWidth="1.300" />
    <circle cx="1021" cy="563" r="27" fill="#00ccff" stroke="#10d090" strokeWidth="1" />
    <path d="M625 835V626H636V835ZM1053 835V626H1042V835Z" stroke="#10c0c8" fill="none" strokeWidth="1.300" />
    <path d="M636 626A203 209 0 0 1 839 835M1042 626A203 209 0 0 0 839 835" stroke="#10c8c8" fill="none" strokeWidth="1.300" />
    <path d="M581 813H625V856M1053 856V813H1278M1515 877H1518" stroke="#b88a10" fill="none" strokeWidth="1.200" />
    <path d="M581 856H625M1053 856H1278" stroke="#7d5d00" fill="none" strokeWidth="1.500" />
    <path d="M625 856H1053" stroke="#0a9aa0" strokeWidth="1.600" />
    <rect x="581" y="953" width="82" height="40" fill="url(#hatch)" stroke="#5a4fd0" strokeWidth="1.200" />
    <path d="M643 929V905" stroke="#00e000" strokeWidth="4" />
    <path d="M643 893l6 13h-12z" fill="#00e000" />
    <path d="M643 929H668" stroke="#f00000" strokeWidth="4" />
    <path d="M681 929l-14 -6v12z" fill="#f00000" />
    <circle cx="643" cy="929" r="6.500" fill="#0000c8" />
    <text x="643" y="889" fill="#00d000" fontSize="17" textAnchor="middle" fontFamily="Liberation Sans, sans-serif">Y</text>
    <text x="689" y="935" fill="#f00000" fontSize="17" textAnchor="middle" fontFamily="Liberation Sans, sans-serif">X</text>
  </CanvasSvg>
);

const WinLogo = () => (
  <svg width="21" height="21" viewBox="0 0 21 21" fill="#fff"><path d="M0 3l8.500-1.200v8.200H0zM9.500 1.700L21 0v10H9.500zM0 11h8.500v8.200L0 18zM9.500 11H21v10L9.500 19.300z" /></svg>
);
const Edge = () => (
  <svg width="31" height="30" viewBox="0 0 30 30"><defs><linearGradient id="eg" x1="0" y1="0" x2="1" y2="1"><stop offset="0" stopColor="#38d0a0" /><stop offset="1" stopColor="#0a6fc4" /></linearGradient></defs><circle cx="15" cy="15" r="14" fill="url(#eg)" /><path d="M29 17c-1-5-6-8-11-7-5 1-7 6-5 10s7 6 12 3" fill="#0b3d8c" /><circle cx="19" cy="18" r="4.500" fill="#20384a" /></svg>
);
const Explorer = () => (
  <svg width="28" height="27" viewBox="0 0 28 30" preserveAspectRatio="none"><path d="M1 3h11l2 3h13v23H1z" fill="#f7c84a" /><path d="M1 3h11l2 3H1z" fill="#c9962a" /><rect x="8" y="20" width="12" height="9" fill="#3b8de0" /><rect x="11" y="23" width="6" height="6" fill="#f7c84a" /></svg>
);
const Mail = () => (
  <svg width="30" height="23" viewBox="0 0 30 26" preserveAspectRatio="none"><path d="M0 10L15 0l15 10v16H0z" fill="#fff" /><path d="M1 10l14 9 14-9-14 5z" fill="#20384a" /><path d="M21 15l9 10V11z" fill="#20384a" /></svg>
);
const IE = () => (
  <svg width="26" height="30" viewBox="0 0 30 34" fill="none"><circle cx="15" cy="17" r="12" fill="#72c72e" /><path d="M8 16h14a7 7 0 0 0-14 0zM8 19h14a7.500 7.500 0 0 1-13 3" fill="#fff" /><path d="M4 30C0 28 20 6 26 3c3-1 2 4 0 7" stroke="#5aa824" strokeWidth="1.500" /></svg>
);
const Baidu = () => (
  <svg width="30" height="30" viewBox="0 0 30 30"><rect width="30" height="30" fill="#fff" /><g fill="#2f66e0"><ellipse cx="10" cy="6" rx="2.500" ry="3.200" /><ellipse cx="19" cy="6" rx="2.500" ry="3.200" /><ellipse cx="5" cy="12" rx="2.200" ry="3" /><ellipse cx="25" cy="12" rx="2.200" ry="3" /><path d="M15 10c4 0 9 6 9 11 0 5-3 6-9 6s-9-1-9-6c0-5 5-11 9-11z" /></g><text x="15" y="25" fill="#fff" fontSize="11" textAnchor="middle" fontFamily="Liberation Sans, sans-serif">du</text></svg>
);
const AppTile = () => (
  <svg width="30" height="30" viewBox="0 0 30 30"><rect width="30" height="30" rx="3" fill="#d8daf5" /><path d="M7 24L15 6l1 9-4 5 8-5 4 8" stroke="#5d55c8" strokeWidth="3.500" fill="none" strokeLinecap="round" strokeLinejoin="round" /></svg>
);
const CadTile = () => (
  <svg width="30" height="30" viewBox="0 0 30 30"><rect width="30" height="30" rx="3" fill="#8a8a8a" /><rect x="2" y="2" width="26" height="26" rx="2" fill="#1d66b8" /><text x="15" y="19" fill="#dce9f7" fontSize="11" textAnchor="middle" fontFamily="Liberation Sans, sans-serif">CAD</text></svg>
);
const Sun = () => (
  <svg width="24" height="24" viewBox="0 0 24 24"><defs><linearGradient id="sg" x1="0" y1="0" x2="0" y2="1"><stop offset="0" stopColor="#ffdb70" /><stop offset="1" stopColor="#f7a318" /></linearGradient></defs><circle cx="12" cy="12" r="11.500" fill="url(#sg)" /></svg>
);
const Tr: React.FC<{ children: React.ReactNode; w?: number }> = ({ children, w = 20 }) => (
  <svg width={w} height="22" viewBox={`0 0 ${w} 22`} fill="none" stroke="#fff" strokeWidth="1.200">{children}</svg>
);

export default function App() {
  return (
    <Root>
      <Global />
      <Header>
        <LogoSlot><Logo /></LogoSlot>
        <HeaderMain>
          <TitleRow>
            <Qat>
              <Icon name="upload" />
              <Icon name="newfile" />
              <Icon name="folder" />
              <Icon name="save" />
              <QatGroup><Icon name="undo" off size={18} /><Caret $ml={6} /></QatGroup>
              <QatGroup><Icon name="redo" off size={18} /><Caret $ml={6} /></QatGroup>
              <Icon name="sigma" />
              <Icon name="gridview" />
              <Icon name="listdoc" />
              <Icon name="addframe" />
              <Caret $ml={2} />
            </Qat>
            <WindowTitle>广联达BIM安装计量GQI2021 - [C:\Users\TJ0636\Desktop\611（保留系统回编号）.GQI4]</WindowTitle>
            <WinControls>
              <WinBtn><svg width="10" height="10" viewBox="0 0 10 10" stroke="#444" strokeWidth="2"><path d="M1 7h8" /></svg></WinBtn>
              <WinBtn><svg width="12" height="12" viewBox="0 0 12 12" stroke="#444" fill="none"><path d="M1.500 4h7v7h-7zM4 4V1.500h6.500V8H8.500" /></svg></WinBtn>
              <WinBtn><svg width="12" height="12" viewBox="0 0 12 12" stroke="#444" strokeWidth="1.300"><path d="M1 1l10 10M11 1L1 11" /></svg></WinBtn>
            </WinControls>
          </TitleRow>
          <TabRow>
            {TABS.map(([t, w]) => <Tab key={t} $w={w} $on={t === '建模'}>{t}</Tab>)}
            <TabTools>
              <ToolGlyph $w={30}><Icon name="user" /></ToolGlyph>
              <ToolGlyph $w={28}><Icon name="headset" /></ToolGlyph>
              <ToolGlyph $w={30}>?<Caret $ml={2} /></ToolGlyph>
              <ToolGlyph $w={28}><Icon name="shirt" /></ToolGlyph>
              <TopSearch>搜索<Icon name="search" size={14} off /></TopSearch>
              <ToolGlyph $w={20}><svg width="16" height="10" viewBox="0 0 16 10" fill="none" stroke="#444" strokeWidth="1.300"><path d="M1 9l7-7 7 7" /></svg></ToolGlyph>
            </TabTools>
          </TabRow>
        </HeaderMain>
      </Header>

      <Ribbon>
        <Group $w={227} $pad={10}>
          <GroupBody>
            <Col $w={106}>
              <RItem icon="pointer" text="选择" on />
              <RItem icon="batch" text="批量选择" />
              <RItem icon="find" text="查找图元" />
            </Col>
            <Col><RItem icon="dropper" text="拾取构件" /></Col>
          </GroupBody>
          <GroupLabel $shift={-10}>选择<Caret /></GroupLabel>
        </Group>
        <Group $w={346} $pad={8}>
          <GroupBody>
            <Col $w={106}>
              <RItem icon="find" text="查找替换" />
              <RItem icon="window" text="多视图" />
              <RItem icon="split" text="分解CAD" />
            </Col>
            <Col $w={140}>
              <RItem icon="crop" text="补画CAD" />
              <RItem icon="line" text="直线" off caret />
              <RItem icon="layers" text="显示CAD图层" caret />
            </Col>
            <Col>
              <RItem icon="trash" text="C删除" />
              <RItem icon="copy" text="C复制" />
              <RItem icon="move" text="C移动" />
            </Col>
          </GroupBody>
          <GroupLabel $shift={-8}>图纸操作<Caret /></GroupLabel>
        </Group>
        <Group $w={274} $pad={9}>
          <GroupBody>
            <Col $w={168}>
              <RItem icon="copy" text="复制图元到其它层" caret />
              <RItem icon="store" text="图元存盘" caret />
              <RItem icon="cloud" text="云构件库" caret />
            </Col>
            <Col><RItem icon="prop" text="提属性" /></Col>
          </GroupBody>
          <GroupLabel $shift={-9}>通用操作<Caret /></GroupLabel>
        </Group>
        <Group $w={94} $pad={6}>
          <GroupBody>
            <Col $w={40}><ICell icon="copy" /><ICell icon="move" /><ICell icon="trash" /></Col>
            <Col $w={40}><ICell icon="door" /><ICell icon="mirror" /><ICell icon="rotate" /></Col>
          </GroupBody>
          <GroupLabel $shift={-6}>修改<Caret /></GroupLabel>
        </Group>
        <Group $w={96} $pad={9}>
          <GroupBody>
            <Col $w={38}><ICell icon="segment" /><ICell icon="tube" caret /><ICell icon="arc" caret /></Col>
            <Col $w={38}><ICell icon="pipe" /></Col>
          </GroupBody>
          <GroupLabel $shift={-9}>绘图</GroupLabel>
        </Group>
        <Group $w={516} $pad={8}>
          <GroupBody>
            <BigTool $w={60}><Icon name="system" size={38} box={36} />系统图</BigTool>
            <BigTool $w={62}><Icon name="multi" size={38} box={36} />多回路</BigTool>
            <Col $w={105}>
              <RItem icon="single" text="单回路" />
              <RItem icon="setstart" text="设置起点" />
              <RItem icon="pickstart" text="选择起点" />
            </Col>
            <Col $w={169}>
              <RItem icon="cancel" text="取消选择起点" />
              <RItem icon="tree" text="照明回路批量识别" caret />
              <RItem icon="trayline" text="桥架配线" />
            </Col>
            <Col><RItem icon="shield" text="隔盖回路" /></Col>
          </GroupBody>
          <GroupLabel $shift={-8}>识别电线导管<Caret /></GroupLabel>
        </Group>
        <Group $w={98} $pad={12}>
          <GroupBody><Col $w={30}><ICell icon="tableedit" /></Col></GroupBody>
          <GroupLabel $shift={-12}>表格算量</GroupLabel>
        </Group>
        <Group $w={104} $pad={7}>
          <GroupBody>
            <Col $w={47}><ICell icon="filter" caret /><ICell icon="corner" /><ICell icon="check" /></Col>
            <Col $w={43}><ICell icon="beam" /><ICell icon="stack" caret /><ICell icon="ruler" /></Col>
          </GroupBody>
          <GroupLabel $shift={-7}>检查/显示<Caret /></GroupLabel>
        </Group>
        <Group $w={157} $pad={6} $last>
          <GroupBody>
            <Col $w={39}><ICell icon="lines" /><ICell icon="ibeam" off /><ICell icon="brush" /></Col>
            <Col $w={40}><ICell icon="bend" /><ICell icon="twopipe" /><ICell icon="bridge" /></Col>
            <Col $w={40}><ICell icon="capsule" /></Col>
          </GroupBody>
          <GroupLabel $shift={-6}>电线导管二次编辑<Caret /></GroupLabel>
        </Group>
      </Ribbon>

      <SelectRow>
        {SELECTS.map(([s]) => <Select key={s}>{s}<Caret /></Select>)}
        <Select $w={122}>地下一层应急照<Caret $ml={1} /></Select>
      </SelectRow>

      <Main>
        <Column $w={216}>
          <Strip><Close /></Strip>
          <PanelTitle>导航栏</PanelTitle>
          <PanelToolbar $h={32}>
            <TBtn $w={33} $pad={9}><Icon name="plusdot" size={18} /></TBtn>
            <TBtn $w={26} $pad={4}><Icon name="minusdot" size={18} /></TBtn>
            <TBtn $w={24} $pad={4}><Icon name="editbox" size={22} /></TBtn>
          </PanelToolbar>
          <NavTree>
            {TREE_TOP.map(t => <TreeRow key={t}><Arrow />{t}</TreeRow>)}
            <TreeRow><Arrow $open />电气</TreeRow>
            {TREE_EL.map(([ic, t]) => (
              <TreeRow key={t} $child>
                <ChildPill $on={t.startsWith('电线')}><Icon name={ic} size={19} />{t}</ChildPill>
              </TreeRow>
            ))}
            {TREE_BOTTOM.map(t => <TreeRow key={t}><Arrow />{t}</TreeRow>)}
          </NavTree>
        </Column>
        <PlainGap />
        <Column $w={354}>
          <Strip><Close /></Strip>
          <PanelTitle>构件列表</PanelTitle>
          <PanelToolbar $h={32}>
            <TBtn $w={85} $pad={5}><Icon name="newfile" size={20} />新建<Caret $ml={2} /></TBtn>
            <TBtn $w={63}><Icon name="trash" size={19} />删除</TBtn>
            <TBtn $w={66}><Icon name="copy" size={19} />复制</TBtn>
            <TBtn $w={90}><Icon name="library" size={19} />构件库</TBtn>
            <More>▸▸</More>
          </PanelToolbar>
          <SearchBar $h={24}>搜索构件...<Icon name="search" size={14} off /></SearchBar>
          <ListBox>
            {LIST.map(t => <ListRow key={t}>{t}</ListRow>)}
            <ScrollV $top={135} $h={125} $right={4} />
            <HArrow $x={8} $bottom={5} />
            <HScrollBar $left={17} $w={228} $bottom={5} />
            <HArrow $right $x={325} $bottom={5} />
          </ListBox>
          <CadHead $mt={6}><Close /></CadHead>
          <PanelTitle>属性</PanelTitle>
          <PropArea>
            <Grid $w={333}>
              <thead>
                <tr><Th $w={28} /><Th $w={143}>属性名称</Th><Th $w={111}>属性值</Th><Th>附加</Th></tr>
              </thead>
              <tbody>
                {PROPS.map(([n, v, , on, noCheck], i) => (
                  <tr key={n}>
                    <Td $num>{i + 1}</Td>
                    <Td $blue={BLUE_PROPS.includes(n)}>{n}</Td>
                    <Td $pad={4}>{v}</Td>
                    <Td $c>{!noCheck && <Check $on={on}>{on && <CheckMark />}</Check>}</Td>
                  </tr>
                ))}
              </tbody>
            </Grid>
            <ScrollV $top={20} $h={145} $right={5} />
          </PropArea>
          <FootRow><PlainBtn>提属性</PlainBtn></FootRow>
        </Column>
        <Splitter $w={5} />
        <Canvas>
          <CanvasDrawing />
          <FloatBar>
            <FloatIcon><Icon name="orbit" size={26} /></FloatIcon>
            <FloatIcon $mt={10}><Icon name="cube3d" size={26} /></FloatIcon>
            <FloatIcon $mt={10}><Icon name="cube" size={26} /></FloatIcon>
            <FloatCaret />
            <FloatIcon $mt={9}><Icon name="cubeblue" size={26} /></FloatIcon>
            <FloatCaret />
            <FloatIcon $mt={6}><Icon name="rotate" size={26} /></FloatIcon>
            <FloatCaret />
            <FloatSep />
            <FloatIcon $mt={7}><Icon name="listeye" size={26} /></FloatIcon>
          </FloatBar>
        </Canvas>
        <Splitter $w={5} />
        <Column $w={397}>
          <Strip><Close /></Strip>
          <PanelTitle>图纸管理</PanelTitle>
          <PanelToolbar $h={32}>
            <TBtn $w={71} $pad={7} $gap={6}><Icon name="addframe" size={19} />添加</TBtn>
            <TBtn $w={78} $off><Icon name="locate" size={19} off />定位<Caret $ml={0} /></TBtn>
            <TBtn $w={108} $off><Icon name="splitdoc" size={19} off />手动分割<Caret $ml={0} /></TBtn>
            <TBtn $w={90}><Icon name="copydoc" size={19} />复制</TBtn>
            <More>▸▸</More>
          </PanelToolbar>
          <SearchBar $h={30}>搜索图纸...<Icon name="search" size={14} off /></SearchBar>
          <DrawingArea>
            <Grid $w={375}>
              <thead>
                <tr><Th $w={27} /><Th $w={139} $sel>图纸名称</Th><Th $w={63}>比例</Th><Th $w={89}>楼层</Th><Th>分层</Th></tr>
              </thead>
            </Grid>
            <BodyClip>
              <Grid $w={375}>
                <colgroup><col width={27} /><col width={139} /><col width={63} /><col width={89} /><col /></colgroup>
                <tbody>
                  {SHEETS.map(s => {
                    const sel = s.n === 24;
                    return (
                      <tr key={s.n}>
                        <Td $num $sel={sel}>{s.n}</Td>
                        <NameCell $depth={s.depth} $leaf={s.leaf} $focus={sel}>
                          {s.box && <TreeBox $strong={s.box === 2} />}{s.name}
                        </NameCell>
                        <Td $c $rowsel={sel}>{s.ratio}</Td>
                        <Td $c $rowsel={sel}>{s.floor}</Td>
                        <Td $pad={3} $rowsel={sel}>{s.sub}</Td>
                      </tr>
                    );
                  })}
                </tbody>
              </Grid>
            </BodyClip>
            <ScrollV $top={72} $h={23} $right={4} />
            <HArrow $x={8} $bottom={4} />
            <HScrollBar $left={18} $w={254} $bottom={4} />
            <HArrow $right $x={364} $bottom={4} />
          </DrawingArea>
          <CadHead $mt={8}><Close /></CadHead>
          <PanelTitle>CAD图层</PanelTitle>
          <PanelToolbar $h={32}>
            <TBtn $w={120} $pad={7} $gap={8}>选择相同颜色<Caret $ml={0} /></TBtn>
            <TBtn $w={113} $gap={7}>显示CAD图层<Caret $ml={0} /></TBtn>
            <TBtn $w={120} $gap={7}>显示CAD图元<Caret $ml={0} /></TBtn>
          </PanelToolbar>
          <CadArea>
            <Grid $w={297}>
              <thead>
                <tr><Th $w={63}>开/关</Th><Th $w={45}>颜色</Th><Th>名称</Th></tr>
              </thead>
              <tbody>
                {['已提取的CAD图层', 'CAD原始图层'].map(t => (
                  <tr key={t}>
                    <CadRowTd $c><Swatch /></CadRowTd>
                    <CadRowTd $c><PlayTri /></CadRowTd>
                    <CadRowTd $pad={5}>{t}</CadRowTd>
                  </tr>
                ))}
              </tbody>
            </Grid>
          </CadArea>
        </Column>
      </Main>

      <Status>
        <CoordCell $w={331} $pad={3}>X = 10307.96 Y = 8395.47</CoordCell>
        <StatusCell $w={142}>层高：5.1</StatusCell>
        <StatusCell $w={170}>底标高：-5.1</StatusCell>
        <StatusCell $w={125}>0</StatusCell>
        <StatusCell $w={129}>隐藏：0</StatusCell>
        <StatusBtns>
          <StatusBtn $w={30}><Icon name="axes" size={18} /></StatusBtn>
          <StatusBtn $w={44} $on><Icon name="rectpick" size={20} /><Caret $ml={1} /></StatusBtn>
          <StatusBtn $w={43}><Icon name="hexbox" size={20} /><Caret $ml={1} /></StatusBtn>
          <StatusBtn $w={30}><Icon name="xcross" size={20} off /></StatusBtn>
          <StatusBtn $w={44}><Icon name="angle" size={20} /><Caret $ml={1} /></StatusBtn>
          <StatusBtn $w={44}><Icon name="plusbar" size={20} /><Caret $ml={1} /></StatusBtn>
          <StatusBtn $w={30}><Icon name="screen" size={20} /></StatusBtn>
          <StatusBtn $w={30}><Icon name="curve" size={20} /></StatusBtn>
        </StatusBtns>
        <StatusCell $w={150} $pad={8}>CAD图亮度：100%</StatusCell>
        <StatusBtn $w={30}><RoundSym>−</RoundSym></StatusBtn>
        <Slider />
        <StatusBtn $w={32}><RoundSym>+</RoundSym></StatusBtn>
        <StatusCell $w={320}>按鼠标左键指定第一个角点，或拾取构件图元</StatusCell>
      </Status>

      <Taskbar>
        <StartBtn><WinLogo /></StartBtn>
        <TaskSearch>
          <svg width="24" height="26" viewBox="0 0 24 26" fill="none" stroke="#222" strokeWidth="1.500"><circle cx="14" cy="10" r="7.500" /><path d="M9 16L2 25" /></svg>
          在这里输入你要搜索的内容
        </TaskSearch>
        <Slot $w={59}><svg width="20" height="20" viewBox="0 0 20 20" fill="none" stroke="#fff" strokeWidth="2.500"><circle cx="10" cy="10" r="7.500" /></svg></Slot>
        <Slot $w={61}><Tr w={22}><path d="M3 3h12v5H3zM3 14h12v5H3zM18 3v5M18 14v5M1 1h16M1 21h16" /></Tr></Slot>
        <Slot $w={64}><Edge /></Slot>
        <Slot $w={62} $run><Explorer /></Slot>
        <Slot $w={63}><Mail /></Slot>
        <Slot $w={62} $run><IE /></Slot>
        <Slot $w={63}><Baidu /></Slot>
        <Slot $w={61} $run $act><AppTile /></Slot>
        <Slot $w={61} $run><CadTile /></Slot>
        <Tray>
          <Slot $w={34}><Sun /></Slot>
          <TrayText $w={60}>21℃</TrayText>
          <TrayText $w={42}>晴朗</TrayText>
          <Slot $w={42}><Tr><path d="M3 14l7-7 7 7" /></Tr></Slot>
          <Slot $w={26}><Tr><path d="M2 18A16 16 0 0 1 18 2M6 18A12 12 0 0 1 18 6M10 18a8 8 0 0 1 8-8" strokeDasharray="2 1.500" /></Tr></Slot>
          <Slot $w={32}><Tr><path d="M2 8h4l5-4v14l-5-4H2zM14 8l5 6M19 8l-5 6" /></Tr></Slot>
          <Slot $w={28}><Tr><path d="M2 4v14" /><rect x="4" y="6" width="14" height="12" fill="#fff" /></Tr></Slot>
          <TrayText $w={32} $fs={17}>中</TrayText>
          <Slot $w={38}><svg width="20" height="20" viewBox="0 0 22 24"><rect x="1" y="1" width="20" height="22" rx="6" fill="#e8502a" /><path d="M16 7c-2-2-9-2-9 2s8 3 8 6-6 3-9 1" stroke="#fff" strokeWidth="3" fill="none" /></svg></Slot>
          <Clock><span>15:12</span><span>2022/5/13</span></Clock>
          <Slot $w={38}><svg width="22" height="24" viewBox="0 0 22 24" fill="none" stroke="#fff" strokeWidth="1.300"><path d="M2 2h18v15h-7l-2 4-2-4H2z" /></svg></Slot>
          <Slot $w={20} />
        </Tray>
      </Taskbar>
    </Root>
  );
}
